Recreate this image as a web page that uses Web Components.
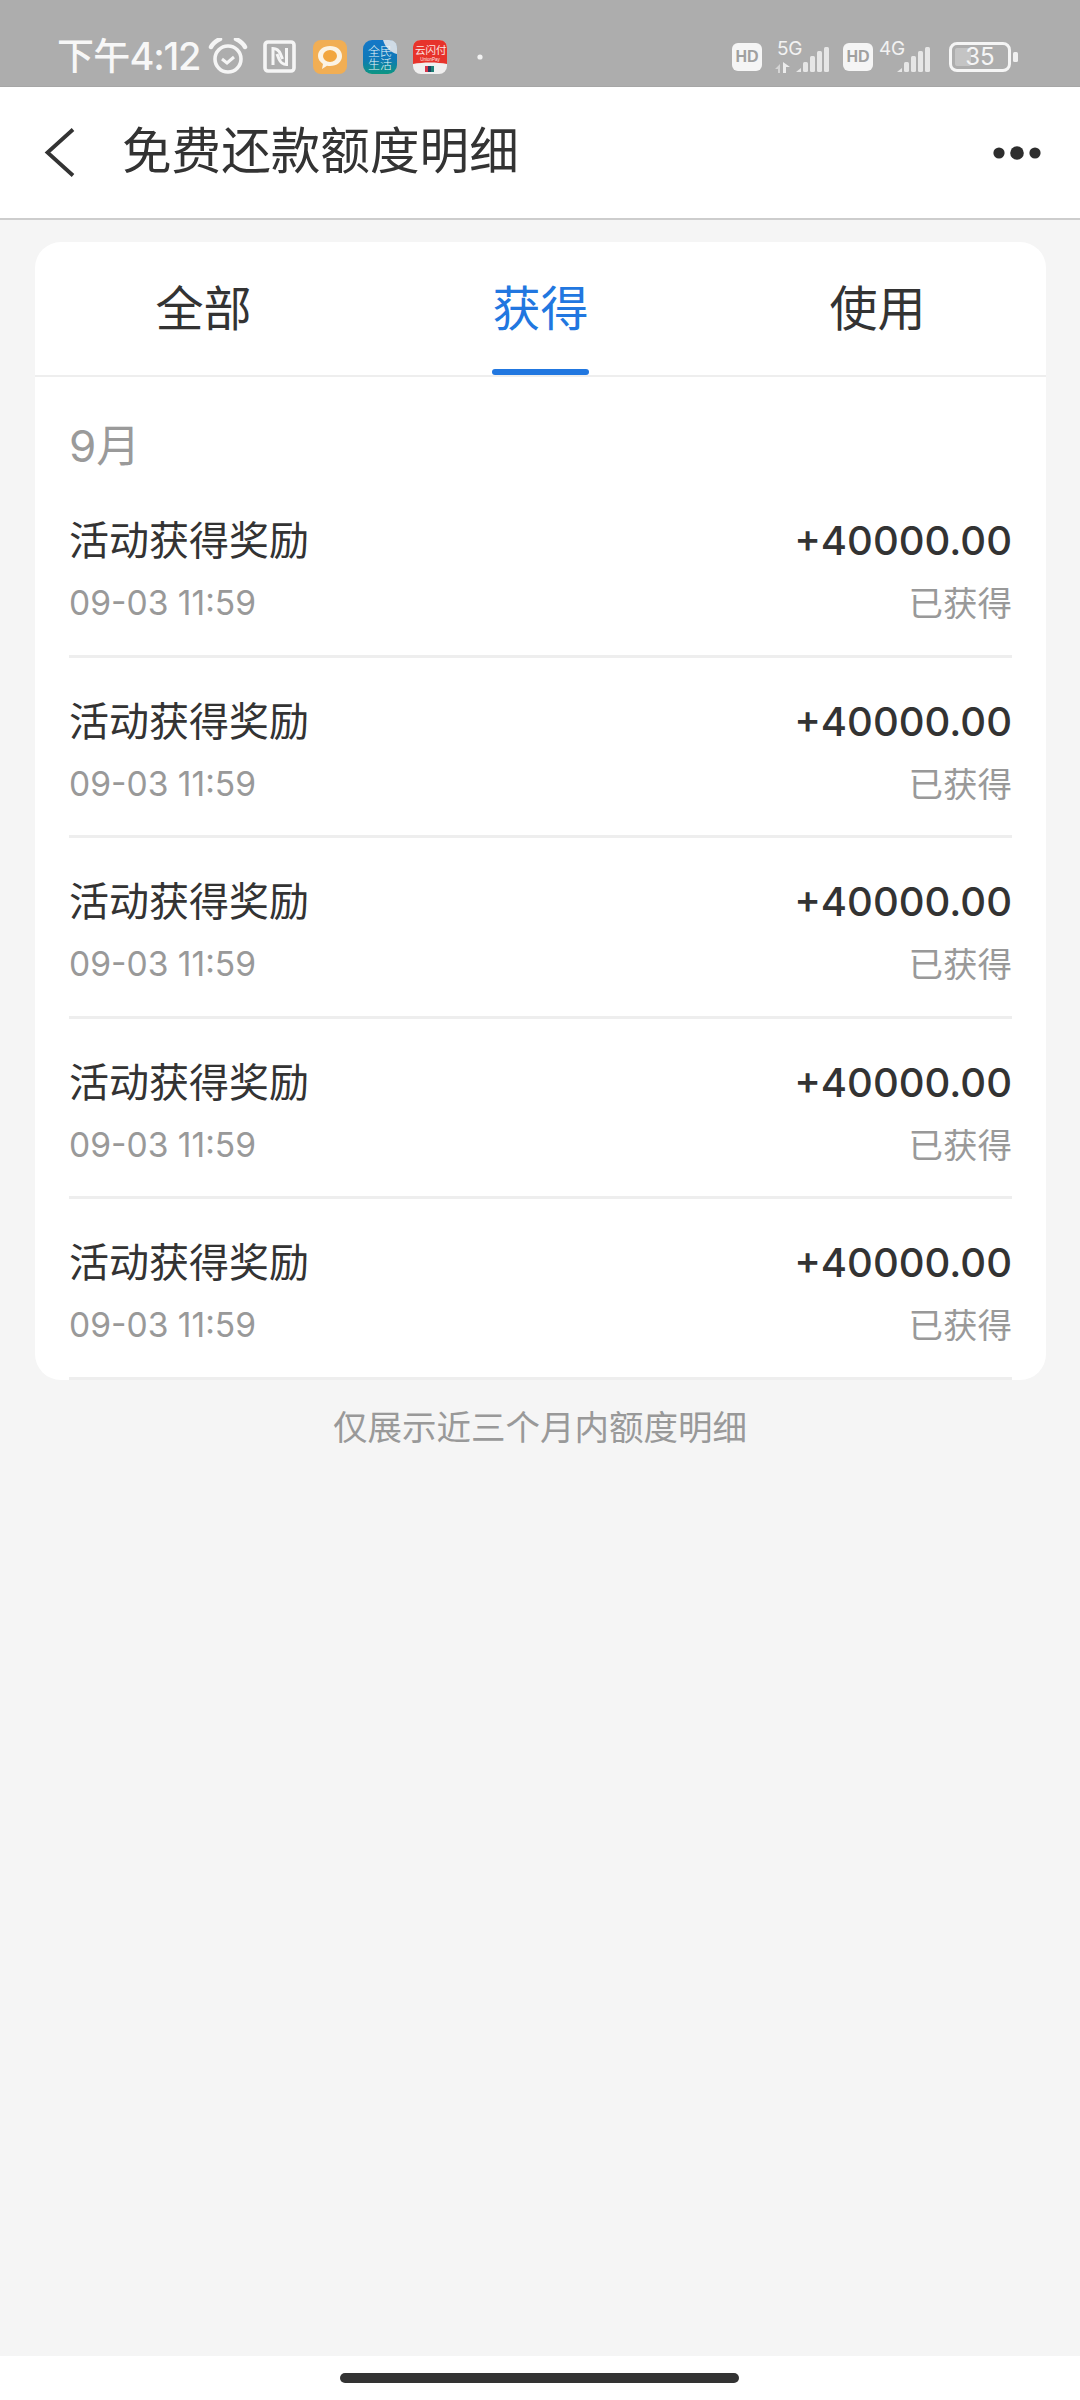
<!DOCTYPE html>
<html lang="zh-CN">
<head>
<meta charset="utf-8">
<title>免费还款额度明细</title>
<style>
html,body{margin:0;padding:0;background:#f5f5f5;}
body{font-family:"Noto Sans CJK SC","Noto Sans",sans-serif;color:#333;}
</style>
</head>
<body>
<app-screen>
  <status-bar></status-bar>
  <nav-bar>免费还款额度明细</nav-bar>
  <ledger-card>
    <tab-bar>
      <tab-item>全部</tab-item>
      <tab-item active>获得</tab-item>
      <tab-item>使用</tab-item>
    </tab-bar>
    <month-label>9月</month-label>
    <record-row title="活动获得奖励" date="09-03 11:59" amount="+40000.00" state="已获得"></record-row>
    <record-row title="活动获得奖励" date="09-03 11:59" amount="+40000.00" state="已获得"></record-row>
    <record-row title="活动获得奖励" date="09-03 11:59" amount="+40000.00" state="已获得"></record-row>
    <record-row title="活动获得奖励" date="09-03 11:59" amount="+40000.00" state="已获得"></record-row>
    <record-row title="活动获得奖励" date="09-03 11:59" amount="+40000.00" state="已获得"></record-row>
  </ledger-card>
  <foot-note>仅展示近三个月内额度明细</foot-note>
  <home-bar></home-bar>
</app-screen>
<script>
function comp(name, html){
  customElements.define(name, class extends HTMLElement{
    connectedCallback(){
      if(this.shadowRoot) return;
      this.attachShadow({mode:'open'}).innerHTML=html;
    }
  });
}
const CJK='"Noto Sans CJK SC","Noto Sans",sans-serif';
comp('app-screen',`<style>:host{display:flex;flex-direction:column;width:1080px;height:2400px;overflow:hidden;background:#f5f5f5;font-family:${CJK};color:#333}</style><slot></slot>`);

const bars=`<path d="M0 25 L5 21 V25Z" fill="#e6e6e6"/><rect x="7" y="15" width="5" height="10" rx="1.5" fill="#e6e6e6"/><rect x="14" y="9" width="5" height="16" rx="1.5" fill="#e6e6e6"/><rect x="21" y="4" width="5" height="21" rx="1.5" fill="#e6e6e6"/><rect x="28" y="0" width="5" height="25" rx="1.5" fill="#e6e6e6"/>`;
comp('status-bar',`<style>
:host{display:flex;align-items:center;height:87px;box-sizing:border-box;padding:27px 0 0 57px;background:#adadad;border-bottom:1px solid #a6a6a6;color:#f7f7f7;flex:none}
.t{font:500 37px/56px "Noto Sans CJK SC",sans-serif;letter-spacing:-.8px;width:143px;white-space:nowrap;padding-bottom:3px}
.t b{font:500 38px/56px Inter,sans-serif;letter-spacing:-1.200px}
svg{display:block;flex:none}
.l{display:flex;align-items:center}
.r{display:flex;align-items:center;margin-left:auto;margin-right:62px}
.hd{width:30px;height:28px;border-radius:6px;background:#f5f5f5;color:#a0a0a0;font:700 16px/28px "Liberation Sans",sans-serif;text-align:center;flex:none}
.sim{position:relative;flex:none;height:32px}
.sim span{position:absolute;left:0;top:-2px;font:400 19px/20px Inter,sans-serif;color:#f2f2f2;letter-spacing:-.3px}
.bat{box-sizing:border-box;width:62px;height:30px;border:3px solid #f5f5f5;border-radius:8px;padding:3px;position:relative;flex:none;display:flex}
.bat i{display:block;width:16px;background:#c4c4c4;border-radius:2px}
.bat span{position:absolute;left:0;right:0;top:0;text-align:center;font:400 24px/24px Inter,sans-serif;color:#f5f5f5}
.nub{width:5px;height:10px;background:#f0f0f0;border-radius:1.5px;margin-left:2px;flex:none}
</style>
<div class="l">
<div class="t">下午<b>4:12</b></div>
<svg width="40" height="37" viewBox="0 0 40 37" style="margin-left:8px" fill="none" stroke="#f5f5f5"><circle cx="20" cy="21" r="13" stroke-width="3.6"/><path d="M14 21l5 4 7-6" stroke-width="3"/><path d="M3 9 C5 5 8 3 12 1" stroke-width="4.5" stroke-linecap="round"/><path d="M37 9 C35 5 32 3 28 1" stroke-width="4.5" stroke-linecap="round"/></svg>
<svg width="33" height="33" viewBox="0 0 33 33" style="margin-left:15px" fill="none" stroke="#f5f5f5"><rect x="2" y="2" width="29" height="29" rx="3" stroke-width="3.6"/><path d="M10 25V8.500c3 0 6 2 7.500 5.500l2 5M23.500 8v16.500c-3 0-6-2-7.500-5.500l-2-5" stroke-width="3"/></svg>
<svg width="34" height="34" viewBox="0 0 34 34" style="margin-left:17px"><rect width="34" height="34" rx="8" fill="#f1ae54"/><path d="M5 16c0-6 5-10 12-10s12 4 12 10-5 10-12 10c-1 0-2 0-3-.2L9 29l1-5c-3-2-5-5-5-8z" fill="#fbf3e4"/><ellipse cx="17" cy="16" rx="7" ry="6" fill="#f2a63e"/></svg>
<svg width="34" height="34" viewBox="0 0 34 34" style="margin-left:16px"><defs><linearGradient id="g" x1="0" y1="0" x2="0" y2="1"><stop offset="0" stop-color="#1478c8"/><stop offset=".55" stop-color="#0f78b8"/><stop offset="1" stop-color="#0d9682"/></linearGradient></defs><rect width="34" height="34" rx="9" fill="url(#g)"/><path d="M20 0h6c5 0 8 3 8 8v6C29 13 22 8 20 0z" fill="#cfdbe6"/><text x="5" y="16" font-size="12" fill="#e8f6f6" font-family="Noto Sans CJK SC" font-weight="300">全民</text><text x="5" y="29" font-size="12" fill="#e8f6f6" font-family="Noto Sans CJK SC" font-weight="300">生活</text></svg>
<svg width="34" height="34" viewBox="0 0 34 34" style="margin-left:16px"><rect width="34" height="34" rx="8" fill="#f0efef"/><path d="M0 8c0-5 3-8 8-8h18c5 0 8 3 8 8v16c-10-2-24-2-34 0z" fill="#e7332b"/><text x="2" y="14" font-size="10.500" fill="#fbe5e2" font-family="Noto Sans CJK SC">云闪付</text><text x="17" y="21" font-size="4.500" fill="#fbe5e2" font-family="Liberation Sans" text-anchor="middle">UnionPay</text><rect x="12" y="26" width="3" height="6" fill="#d7334a"/><rect x="15" y="26" width="3" height="6" fill="#20405f"/><rect x="18" y="26" width="3" height="6" fill="#1d7f76"/></svg>
<svg width="6" height="6" viewBox="0 0 6 6" style="margin-left:30px"><circle cx="3" cy="3" r="2.600" fill="#f2f2f2"/></svg>
</div>
<div class="r">
<div class="hd">HD</div>
<div class="sim" style="width:54px;margin-left:13px"><span style="left:2px">5G</span>
<svg width="16" height="11" viewBox="0 0 16 11" style="position:absolute;left:0;top:21px"><path d="M0 7 L5 2 V11 H3 V7z" fill="#d4d4d4"/><path d="M8 11 V0 L15 5 H11 V11z" fill="#ececec"/></svg>
<svg width="33" height="25" viewBox="0 0 33 25" style="position:absolute;left:21px;top:6px">${bars}</svg></div>
<div class="hd" style="margin-left:14px">HD</div>
<div class="sim" style="width:54px;margin-left:6px"><span>4G</span>
<svg width="33" height="25" viewBox="0 0 33 25" style="position:absolute;left:18px;top:6px">${bars}</svg></div>
<div class="bat" style="margin-left:16px"><i></i><span>35</span></div><div class="nub"></div>
</div>`);

comp('nav-bar',`<style>
:host{display:flex;align-items:center;height:133px;box-sizing:border-box;border-bottom:2px solid #cdcdcd;background:#fff;flex:none}
svg{display:block;flex:none}
.title{font:400 49.600px/60px ${CJK};color:#333;margin-left:47px;flex:1;white-space:nowrap;padding-bottom:11px}
.back{margin-left:44px}
.more{margin-right:38px}
</style>
<svg class="back" width="31" height="49" viewBox="0 0 31 49" fill="none"><path d="M29 1.500 L3.500 24.500 L29 47.500" stroke="#333" stroke-width="3.800"/></svg>
<div class="title"><slot></slot></div>
<svg class="more" width="50" height="14" viewBox="0 0 50 14"><circle cx="7" cy="7" r="5.600" fill="#2d2d2d"/><circle cx="25" cy="7" r="6.800" fill="#2d2d2d"/><circle cx="43" cy="7" r="5.600" fill="#2d2d2d"/></svg>`);

comp('ledger-card',`<style>
:host{display:block;flex:none;height:1138px;margin:22px 34px 0 35px;background:#fff;border-radius:26px;overflow:hidden}
</style><slot></slot>`);

comp('tab-bar',`<style>
:host{display:grid;grid-template-columns:repeat(3,1fr);height:135px;box-sizing:border-box;border-bottom:2px solid #eee}
</style><slot></slot>`);

comp('tab-item',`<style>
:host{display:flex;justify-content:center;position:relative;font:400 48px/60px ${CJK};color:#333;padding-top:33px;box-sizing:border-box;height:133px}
:host([active]){color:#2177e0}
:host([active])::after{content:"";position:absolute;left:50%;margin-left:-48.500px;width:97px;height:6px;bottom:0;border-radius:3px;background:#2177e0}
</style><slot></slot>`);

comp('month-label',`<style>
:host{display:block;height:100px;box-sizing:border-box;padding:39px 0 0 34px;font:400 44px/60px Inter,${CJK};color:#9a9a9a}
</style><slot></slot>`);

customElements.define('record-row',class extends HTMLElement{
  connectedCallback(){
    if(this.shadowRoot) return;
    const r=this.attachShadow({mode:'open'});
    const a=n=>this.getAttribute(n);
    r.innerHTML=`<style>
    :host{display:grid;grid-template-columns:1fr auto;grid-template-rows:60px 62px;align-content:start;height:180.500px;box-sizing:border-box;margin:0 34px 0 34px;padding-top:34px;border-bottom:3px solid #eee}
    .title{font:400 40px/54px ${CJK};color:#333;align-self:start}
    .amount{font:450 40px/60px Inter,sans-serif;color:#333;text-align:right}
    .date{font:400 33.600px/64px Inter,sans-serif;color:#999}
    .state{font:400 34.500px/60px ${CJK};color:#999;text-align:right;align-self:start}
    </style>
    <div class="title">${a('title')}</div><div class="amount">${a('amount')}</div>
    <div class="date">${a('date')}</div><div class="state">${a('state')}</div>`;
  }
});

comp('foot-note',`<style>
:host{display:block;flex:none;margin-top:22px;font:400 34.500px/46px ${CJK};color:#999;text-align:center}
</style><slot></slot>`);

comp('home-bar',`<style>
:host{display:flex;justify-content:center;align-items:flex-start;flex:none;margin-top:auto;height:44px;box-sizing:border-box;padding:17px 1px 0 0;background:#fff}
i{display:block;width:399px;height:10px;border-radius:5px;background:#333}
</style><i></i>`);
</script>
</body>
</html>
